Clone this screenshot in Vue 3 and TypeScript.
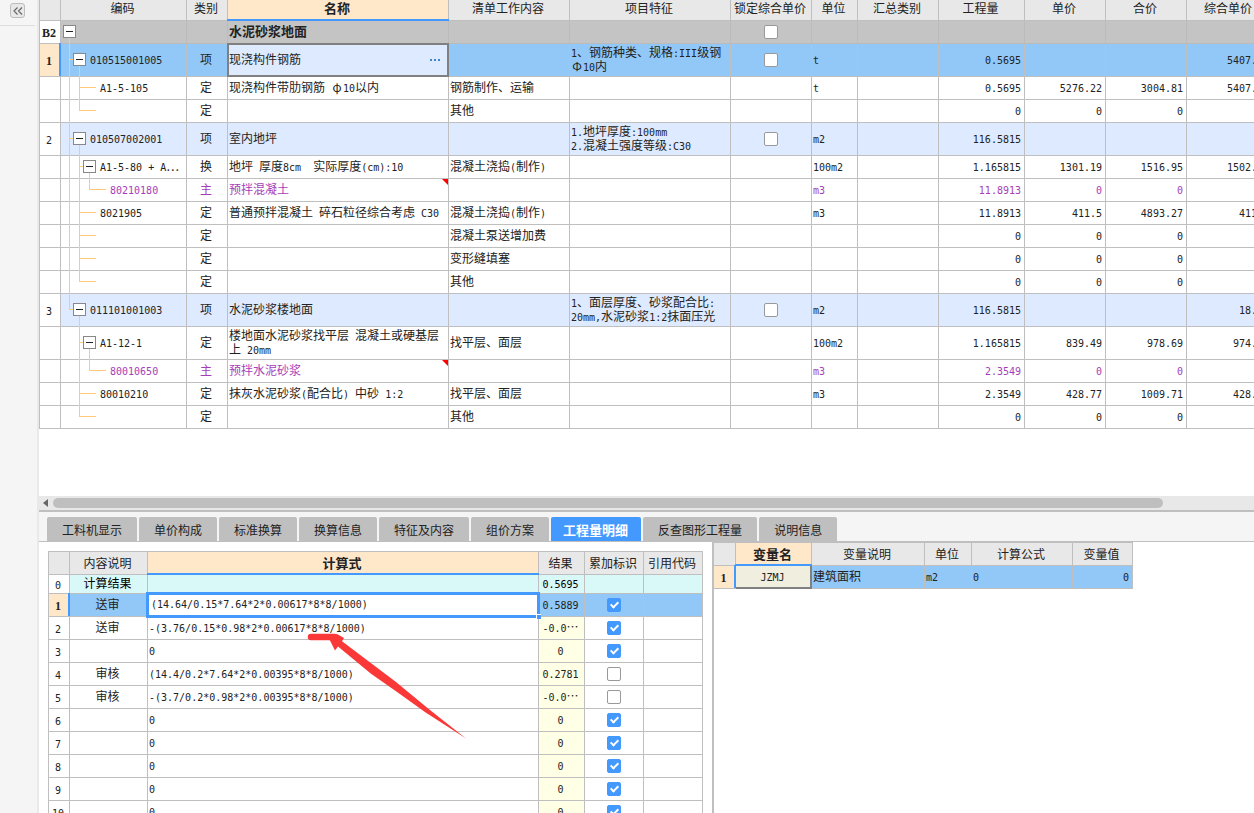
<script setup lang="ts">
import { h, ref, type FunctionalComponent } from 'vue'

/* Latin runs use a half-width face, Greek letters fill a full cell, the rest is full-width. */
const Txt: FunctionalComponent<{ t: string }> = (props) =>
  (props.t.match(/[\x20-\x7e]+|[φΦ]|[^\x20-\x7eφΦ]+/g) ?? []).map((run) =>
    h('span', { class: /^[\x20-\x7e]/.test(run) ? 'latin' : /[φΦ]/.test(run) ? 'greek' : 'wide' }, run),
  )
Txt.props = ['t']

type Guide = 'none' | 'pass' | 'tee' | 'end'
type Node = 'root' | 'toggle' | 'leaf'

interface Item {
  no: string
  guides: Guide[]
  node: Node
  code: string
  kind: string
  name: string
  work: string
  feature: string
  lock: boolean
  unit: string
  qty: string
  price: string
  total: string
  comp: string
  tone: string
  note?: boolean
}

const item = (
  no: string, guides: Guide[], node: Node, code: string, kind: string, name: string,
  work: string, feature: string, unit: string, nums: string[], tone = '', note = false,
): Item => ({
  no, guides, node, code, kind, name, work, feature, unit, tone, note,
  lock: tone === 'group' || tone === 'section' || tone === 'current',
  qty: nums[0] ?? '', price: nums[1] ?? '', total: nums[2] ?? '', comp: nums[3] ?? '',
})

const zero = ['0', '0', '0']
const items: Item[] = [
  item('B2', [], 'root', '', '', '水泥砂浆地面', '', '', '', [], 'group'),
  item('1', ['tee'], 'toggle', '010515001005', '项', '现浇构件钢筋', '', '1、钢筋种类、规格:III级钢\nΦ10内', 't', ['0.5695', '', '', '5407.'], 'current'),
  item('', ['pass', 'tee'], 'leaf', 'A1-5-105', '定', '现浇构件带肋钢筋 φ10以内', '钢筋制作、运输', '', 't', ['0.5695', '5276.22', '3004.81', '5407.']),
  item('', ['pass', 'end'], 'leaf', '', '定', '', '其他', '', '', zero),
  item('2', ['tee'], 'toggle', '010507002001', '项', '室内地坪', '', '1.地坪厚度:100mm\n2.混凝土强度等级:C30', 'm2', ['116.5815'], 'section'),
  item('', ['pass', 'tee'], 'toggle', 'A1-5-80 + A⋯', '换', '地坪 厚度8cm  实际厚度(cm):10', '混凝土浇捣(制作)', '', '100m2', ['1.165815', '1301.19', '1516.95', '1502.']),
  item('', ['pass', 'pass', 'end'], 'leaf', '80210180', '主', '预拌混凝土', '', '', 'm3', ['11.8913', '0', '0'], 'material', true),
  item('', ['pass', 'tee'], 'leaf', '8021905', '定', '普通预拌混凝土 碎石粒径综合考虑 C30', '混凝土浇捣(制作)', '', 'm3', ['11.8913', '411.5', '4893.27', '411']),
  item('', ['pass', 'tee'], 'leaf', '', '定', '', '混凝土泵送增加费', '', '', zero),
  item('', ['pass', 'tee'], 'leaf', '', '定', '', '变形缝填塞', '', '', zero),
  item('', ['pass', 'end'], 'leaf', '', '定', '', '其他', '', '', zero),
  item('3', ['end'], 'toggle', '011101001003', '项', '水泥砂浆楼地面', '', '1、面层厚度、砂浆配合比:\n20mm,水泥砂浆1:2抹面压光', 'm2', ['116.5815', '', '', '18.'], 'section'),
  item('', ['none', 'tee'], 'toggle', 'A1-12-1', '定', '楼地面水泥砂浆找平层 混凝土或硬基层\n上 20mm', '找平层、面层', '', '100m2', ['1.165815', '839.49', '978.69', '974.'], 'tall'),
  item('', ['none', 'pass', 'end'], 'leaf', '80010650', '主', '预拌水泥砂浆', '', '', 'm3', ['2.3549', '0', '0'], 'material', true),
  item('', ['none', 'tee'], 'leaf', '80010210', '定', '抹灰水泥砂浆(配合比) 中砂 1:2', '找平层、面层', '', 'm3', ['2.3549', '428.77', '1009.71', '428.']),
  item('', ['none', 'end'], 'leaf', '', '定', '', '其他', '', '', zero),
]

const mainCols = [
  { label: '', w: 22 }, { label: '编码', w: 126 }, { label: '类别', w: 41 },
  { label: '名称', w: 221 }, { label: '清单工作内容', w: 121 }, { label: '项目特征', w: 161 },
  { label: '锁定综合单价', w: 81 }, { label: '单位', w: 46 }, { label: '汇总类别', w: 81 },
  { label: '工程量', w: 86 }, { label: '单价', w: 81 }, { label: '合价', w: 81 },
  { label: '综合单价', w: 85 },
]

const tabs = ['工料机显示', '单价构成', '标准换算', '换算信息', '特征及内容', '组价方案', '工程量明细', '反查图形工程量', '说明信息']
const activeTab = ref('工程量明细')

const calcCols = [
  { label: '', w: 22 }, { label: '内容说明', w: 78 }, { label: '计算式', w: 391 },
  { label: '结果', w: 46 }, { label: '累加标识', w: 59 }, { label: '引用代码', w: 59 },
]
const formula = ref('(14.64/0.15*7.64*2*0.00617*8*8/1000)')
const calcRows = ref([
  { note: '送审', expr: '', result: '0.5889', add: true },
  { note: '送审', expr: '-(3.76/0.15*0.98*2*0.00617*8*8/1000)', result: '-0.0⋯', add: true },
  { note: '', expr: '0', result: '0', add: true },
  { note: '审核', expr: '(14.4/0.2*7.64*2*0.00395*8*8/1000)', result: '0.2781', add: false },
  { note: '审核', expr: '-(3.7/0.2*0.98*2*0.00395*8*8/1000)', result: '-0.0⋯', add: false },
  ...Array.from({ length: 5 }, () => ({ note: '', expr: '0', result: '0', add: true })),
])

const varCols = [
  { label: '', w: 22 }, { label: '变量名', w: 76 }, { label: '变量说明', w: 113 },
  { label: '单位', w: 47 }, { label: '计算公式', w: 101 }, { label: '变量值', w: 60 },
]
</script>

<template>
  <div class="shell">
    <aside class="rail">
      <div class="rail-top">
        <button class="collapse" type="button" aria-label="收起">
          <svg viewBox="0 0 10 8" width="10" height="8"><path d="M4.500 .5 1 4l3.500 3.500M9 .5 5.500 4 9 7.500" fill="none" stroke="#666" stroke-width="1.200" /></svg>
        </button>
      </div>
    </aside>

    <main class="work">
      <section class="upper">
        <table class="grid main-grid">
          <colgroup><col v-for="c in mainCols" :key="c.label" :style="{ width: c.w + 'px' }" /></colgroup>
          <thead>
            <tr><th v-for="c in mainCols" :key="c.label" :class="{ on: c.label === '名称' }">{{ c.label }}</th></tr>
          </thead>
          <tbody>
            <tr v-for="(r, i) in items" :key="i" :class="r.tone">
              <th class="num" scope="row"><Txt :t="r.no" /></th>
              <td class="code">
                <div class="tree">
                  <span v-for="(g, k) in r.guides" :key="k" class="guide" :class="g"></span>
                  <button v-if="r.node !== 'leaf'" class="toggle" type="button" aria-label="折叠"></button>
                  <span v-else class="dash"></span>
                  <span class="label"><Txt :t="r.code" /></span>
                </div>
              </td>
              <td class="mid"><Txt :t="r.kind" /></td>
              <td class="name">
                <Txt :t="r.name" />
                <button v-if="r.tone === 'current'" class="more" type="button" aria-label="更多"><i></i><i></i><i></i></button>
                <span v-if="r.note" class="corner"></span>
              </td>
              <td><Txt :t="r.work" /></td>
              <td><Txt :t="r.feature" /></td>
              <td class="check"><input v-if="r.lock" class="tick" type="checkbox" aria-label="锁定综合单价" /></td>
              <td><Txt :t="r.unit" /></td>
              <td></td>
              <td class="end"><Txt :t="r.qty" /></td>
              <td class="end"><Txt :t="r.price" /></td>
              <td class="end"><Txt :t="r.total" /></td>
              <td class="end last"><Txt :t="r.comp" /></td>
            </tr>
          </tbody>
        </table>
      </section>

      <div class="scroll">
        <button class="scroll-left" type="button" aria-label="向左滚动"></button>
        <div class="track"><div class="thumb"></div></div>
      </div>

      <nav class="tabs" role="tablist">
        <button v-for="t in tabs" :key="t" type="button" role="tab" class="tab" :class="{ active: t === activeTab }" :aria-selected="t === activeTab" @click="activeTab = t">{{ t }}</button>
      </nav>

      <section class="lower">
        <div class="calc">
          <table class="grid calc-grid">
            <colgroup><col v-for="c in calcCols" :key="c.label" :style="{ width: c.w + 'px' }" /></colgroup>
            <thead>
              <tr><th v-for="c in calcCols" :key="c.label" :class="{ on: c.label === '计算式' }">{{ c.label }}</th></tr>
            </thead>
            <tbody>
              <tr class="sum">
                <th class="num" scope="row"><Txt t="0" /></th>
                <td class="mid">计算结果</td><td></td><td class="mid"><Txt t="0.5695" /></td><td></td><td></td>
              </tr>
              <tr v-for="(r, i) in calcRows" :key="i" :class="{ current: i === 0 }">
                <th class="num" scope="row"><Txt :t="String(i + 1)" /></th>
                <td class="mid">{{ r.note }}</td>
                <td v-if="i === 0" class="edit">
                  <input v-model="formula" class="formula latin" type="text" aria-label="计算式" />
                  <span class="handle"></span>
                </td>
                <td v-else><Txt :t="r.expr" /></td>
                <td class="mid result"><Txt :t="r.result" /></td>
                <td class="check"><input v-model="r.add" class="tick" type="checkbox" aria-label="累加标识" /></td>
                <td></td>
              </tr>
            </tbody>
          </table>
          <svg class="arrow" viewBox="0 0 160 108" width="160" height="108" aria-hidden="true">
            <path d="M5 6H28.500" fill="none" stroke="#fb3838" stroke-width="6.500" stroke-linecap="round" />
            <path d="M23 7.500 31 3 38 7 36 10.300 90 51 123 78.300 160 107.500 120 81.700 90 60.300 65 42.700 32 15.500 29 19.500Z" fill="#fb3838" />
          </svg>
        </div>

        <div class="vars">
          <table class="grid var-grid">
            <colgroup><col v-for="c in varCols" :key="c.label" :style="{ width: c.w + 'px' }" /></colgroup>
            <thead>
              <tr><th v-for="c in varCols" :key="c.label" :class="{ on: c.label === '变量名' }">{{ c.label }}</th></tr>
            </thead>
            <tbody>
              <tr class="current">
                <th class="num" scope="row"><Txt t="1" /></th>
                <td class="mid picked"><Txt t="JZMJ" /></td>
                <td>建筑面积</td>
                <td><Txt t="m2" /></td>
                <td><Txt t="0" /></td>
                <td class="end"><Txt t="0" /></td>
              </tr>
            </tbody>
          </table>
        </div>
      </section>
    </main>
  </div>
</template>

<style>
body {
  margin: 0;
  overflow: hidden;
}
.latin {
  font-family: 'DejaVu Sans Mono', monospace;
  font-size: 10px;
  line-height: 10px;
}
.greek {
  display: inline-block;
  width: 12px;
  line-height: 12px;
  text-align: center;
}
.num .latin {
  font-size: 10px;
}
.group .num .latin,
.current .num .latin {
  font-family: 'Liberation Serif', serif;
  font-size: 12px;
}
</style>

<style scoped>
.shell {
  display: flex;
  height: 100vh;
  overflow: hidden;
  background: #fff;
  color: #222;
  font: 12px/14px 'Noto Sans CJK SC', sans-serif;
}
button {
  margin: 0;
  padding: 0;
  border: 0;
  font: inherit;
  color: inherit;
}

.rail {
  flex: none;
  width: 37px;
  background: #f5f5f5;
  border-right: 2px solid #e9e9e9;
}
.rail-top {
  box-sizing: border-box;
  width: 35px;
  height: 26px;
  padding: 3px 10px 0;
  border-bottom: 1px solid #dedede;
}
.collapse {
  display: flex;
  align-items: center;
  justify-content: center;
  width: 15px;
  height: 15px;
  border: 1px solid #bdbdbd;
  border-radius: 3px;
  background: #e8e8e8;
  box-sizing: border-box;
}

.work {
  flex: 1;
  min-width: 0;
  display: grid;
  grid-template-columns: minmax(0, 1fr);
  grid-template-rows: minmax(0, 496fr) auto auto minmax(0, 271fr);
}
.upper {
  overflow: hidden;
}

.grid {
  table-layout: fixed;
  border-collapse: separate;
  border-spacing: 0;
  width: 0;
}
.grid th,
.grid td {
  box-sizing: border-box;
  height: 23px;
  padding: 0 3px 2px 1px;
  border: 0 solid #bfbfbf;
  border-right-width: 1px;
  border-bottom-width: 1px;
  position: relative;
  white-space: pre;
  text-align: left;
  font-weight: 400;
}
.grid thead th {
  padding: 0 2px 0 0;
  background: #e8e8e8;
  text-align: center;
}
.grid thead th.on {
  background: #ffe7ca;
  font-size: 13px;
  font-weight: 700;
}
.grid thead th.on::after {
  content: '';
  position: absolute;
  inset: auto -1px -1px;
  height: 2px;
  background: #4499ff;
}
.grid .num {
  padding: 0 2px 0 0;
  background: #fff;
  text-align: center;
}
.grid .mid {
  padding: 0 2px 2px 0;
  text-align: center;
}
.grid .check {
  padding: 0;
}
.grid .end {
  text-align: right;
}
.grid .last {
  padding-right: 14px;
}
.grid .current td {
  background: #92c8f7;
}
.grid .current .num {
  background: #ffe7ca;
  font-weight: 700;
}
.grid .current .num::after {
  content: '';
  position: absolute;
  inset: -1px -1px 0 auto;
  width: 2px;
  background: #4499ff;
}

.main-grid tr > :first-child,
.calc-grid tr > :first-child {
  border-left-width: 1px;
}
.main-grid thead th {
  height: 21px;
  padding-bottom: 4px;
}
.main-grid .group td,
.main-grid .group td.name {
  background: #c4c4c4;
  border-color: #bbb;
}
.main-grid .group .num,
.main-grid .group .name {
  font-weight: 700;
}
.main-grid .group .name {
  font-size: 13px;
}
.main-grid .section td {
  background: #deeaff;
}
.main-grid .current > *,
.main-grid .section > *,
.main-grid .tall > * {
  height: 33px;
}
.main-grid .material td {
  color: #a63db8;
}
.main-grid .current .name {
  background: #deeaff;
}
.main-grid .current .name::after {
  content: '';
  position: absolute;
  inset: -1px;
  border: 2px solid #808080;
  pointer-events: none;
}
.more {
  position: absolute;
  inset: 0 5px 0 auto;
  width: 17px;
  display: flex;
  align-items: center;
  justify-content: center;
  gap: 2px;
  background: none;
}
.more i {
  width: 2px;
  height: 2px;
  background: #3d86cc;
}
.corner {
  position: absolute;
  top: 0;
  right: 0;
  width: 6px;
  height: 6px;
  background: #f00;
  clip-path: polygon(0 0, 100% 0, 100% 100%);
}

.grid .code {
  padding: 0 0 0 3px;
}
.tree {
  display: flex;
  align-items: center;
  height: 100%;
}
.label {
  padding-bottom: 2px;
}
.guide {
  align-self: stretch;
  width: 10px;
  position: relative;
}
.guide::before,
.guide::after,
.toggle::after {
  content: '';
  position: absolute;
  left: 5px;
  background: #ffc978;
}
.guide::before {
  top: 0;
  bottom: -1px;
  width: 1px;
}
.guide::after {
  top: calc(50% - 1px);
  width: 5px;
  height: 1px;
}
.guide.end::before {
  bottom: 50%;
}
.guide.none::before,
.guide.none::after,
.guide.pass::after {
  display: none;
}
.dash {
  width: 12px;
  height: 1px;
  margin: 0 4px 1px 0;
  background: #ffc978;
}
.toggle {
  flex: none;
  box-sizing: border-box;
  width: 13px;
  height: 13px;
  margin: 0 4px 1px -1px;
  border: 1px solid #888;
  background: #fff;
  position: relative;
}
.toggle::before {
  content: '';
  position: absolute;
  inset: 5px 2px;
  background: #222;
}
.toggle::after {
  top: 12px;
  width: 1px;
  height: 6px;
}
.current .toggle::after,
.section .toggle::after,
.tall .toggle::after {
  height: 11px;
}

.tick {
  appearance: none;
  display: block;
  box-sizing: border-box;
  width: 14px;
  height: 14px;
  margin: 0 auto;
  border: 1px solid #999;
  border-radius: 2px;
  background: #fff;
  position: relative;
}
.tick:checked {
  border-color: #4499ff;
  background: #4499ff;
}
.tick:checked::after {
  content: '';
  position: absolute;
  left: 4px;
  top: 1px;
  width: 3px;
  height: 6px;
  border: solid #fff;
  border-width: 0 2px 2px 0;
  transform: rotate(45deg);
}

.scroll {
  display: flex;
  align-items: center;
  height: 14px;
  background: #e8e8e8;
  border-bottom: 2px solid #bfbfbf;
}
.scroll-left {
  width: 5px;
  height: 8px;
  margin: 0 5px 0 4px;
  background: #666;
  clip-path: polygon(0 50%, 100% 0, 100% 100%);
}
.track {
  flex: 1;
}
.thumb {
  width: 92.4%;
  height: 10px;
  border-radius: 5px;
  background: #bfbfbf;
}

.tabs {
  display: flex;
  align-items: flex-end;
  gap: 2px;
  height: 29px;
  padding: 0 0 0 8px;
  background: #f5f5f5;
  border-bottom: 1px solid #bfbfbf;
}
.tab {
  height: 24px;
  padding: 2px 15px 0;
  border-radius: 2px 2px 0 0;
  background: #bfbfbf;
  white-space: nowrap;
}
.tab.active {
  padding: 2px 13px 0 12px;
  background: #4499ff;
  color: #fff;
  font-size: 13px;
  font-weight: 700;
}

.lower {
  display: flex;
  min-height: 0;
  overflow: hidden;
}
.calc {
  flex: none;
  padding: 9px 9px 0;
  position: relative;
}
.calc-grid thead th {
  height: 24px;
  border-top-width: 1px;
}
.calc-grid .sum > * {
  height: 19px;
}
.calc-grid .sum td {
  background: #d9f8f8;
  color: #000;
}
.calc-grid tr:not(.current) .result {
  background: #ffffe6;
}
.calc-grid .current .edit {
  padding: 0;
  background: #fff;
}
.formula {
  position: absolute;
  inset: -2px;
  width: calc(100% + 4px);
  height: calc(100% + 4px);
  box-sizing: border-box;
  margin: 0;
  padding: 0 2px 1px;
  border: 3px solid #4499ff;
  border-radius: 0;
  outline: 0;
  background: #fff;
  color: #222;
  z-index: 1;
}
.handle {
  position: absolute;
  right: -3px;
  bottom: -3px;
  width: 4px;
  height: 4px;
  border: 1px solid #fff;
  border-right: 0;
  border-bottom: 0;
  background: #4499ff;
  z-index: 2;
}
.arrow {
  position: absolute;
  left: 267px;
  top: 89px;
  z-index: 3;
  pointer-events: none;
}

.vars {
  flex: 1;
  min-width: 0;
  border-left: 2px solid #bfbfbf;
  overflow: hidden;
}
.var-grid thead th {
  height: 24px;
  border-top-width: 1px;
}
.var-grid .current .picked {
  background: #f0eedf;
}
.var-grid .picked::after {
  content: '';
  position: absolute;
  inset: 0 -1px -1px 0;
  border: solid #808080;
  border-width: 0 2px 2px 0;
}
</style>
